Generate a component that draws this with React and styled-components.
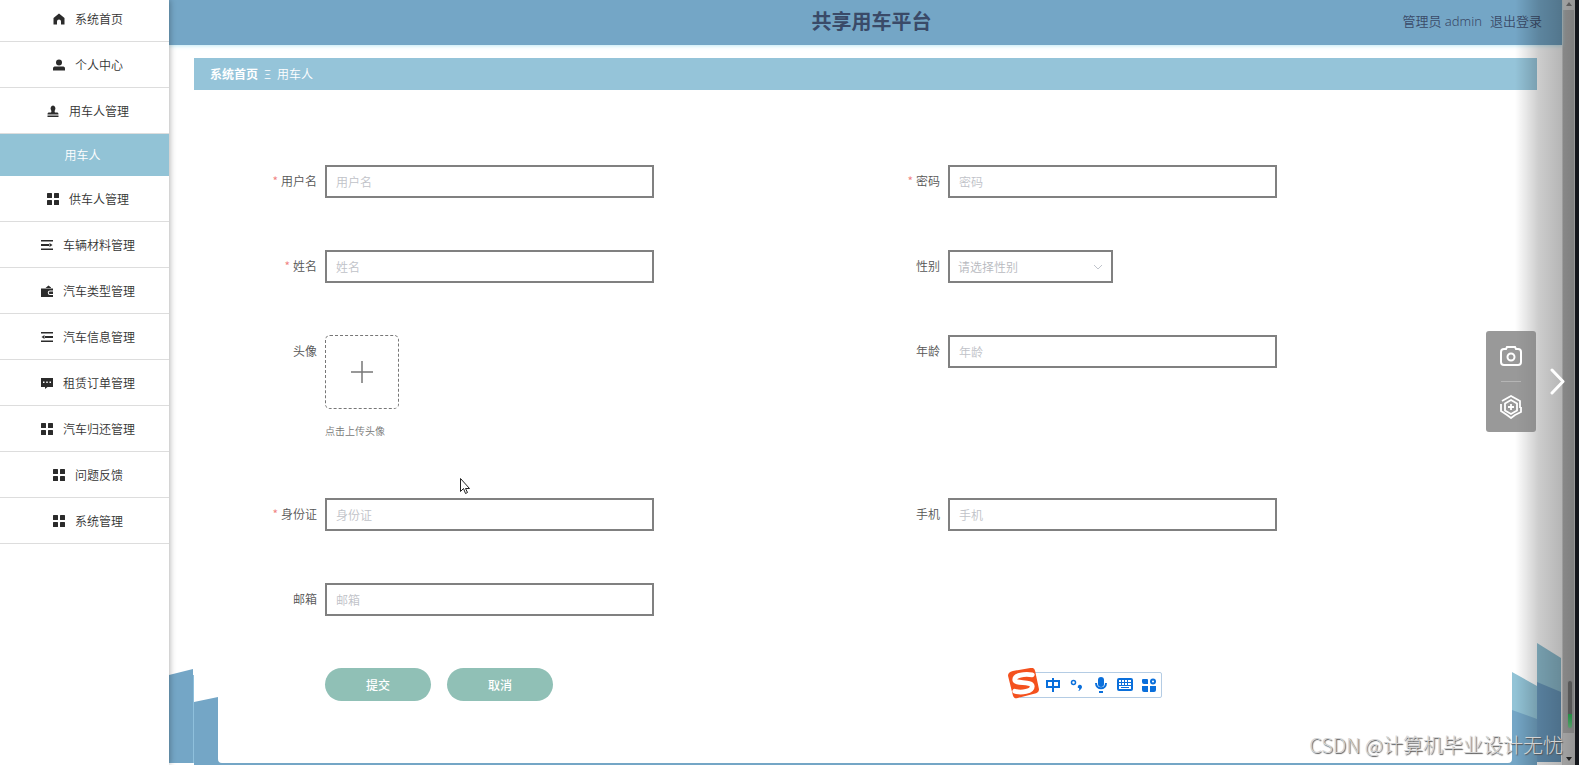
import React, { useState } from 'react';
import styled, { createGlobalStyle, css } from 'styled-components';

const GlobalStyle = createGlobalStyle`
    * {
        box-sizing: border-box;
    }

    body {
        margin: 0;
        background: #fff;
        color: #333;
        font-family: "Noto Sans CJK SC", "Noto Sans", sans-serif;
        font-size: 12px;
        font-weight: 350;
        overflow: hidden;
    }

    button, input, select {
        font-family: inherit;
        font-size: 12px;
        font-weight: inherit;
    }
`;

const icons = {
    home: <path d="M12 1 1 10v13h7v-6a4 4 0 0 1 8 0v6h7V10z" />,
    user: (
        <>
            <circle cx="12" cy="7" r="6" />
            <path d="M0 23v-4c0-3 2-4 5-4h14c3 0 5 1 5 4v4z" />
        </>
    ),
    stamp: (
        <>
            <path d="M12 1a6 6 0 0 0-4 9c1 2 1 4 0 5H5c-3 0-4 1-4 4h22c0-3-1-4-4-4h-3c-1-1-1-3 0-5a6 6 0 0 0-4-9z" />
            <path d="M1 21h22v3H1z" />
        </>
    ),
    grid: (
        <>
            <rect x="0" y="0" width="10" height="10" rx="1" />
            <rect x="14" y="0" width="10" height="10" rx="1" />
            <rect x="0" y="14" width="10" height="10" rx="1" />
            <rect x="14" y="14" width="10" height="10" rx="1" />
        </>
    ),
    unfold: <path d="M0 2h24v3H0zM0 10h16v4H0zM0 19h24v3H0zM17 8l6 4-6 4z" />,
    fold: <path d="M0 2h24v3H0zM8 10h16v4H8zM0 19h24v3H0zM7 8l-6 4 6 4z" />,
    wallet: (
        <>
            <path d="M0 7h24v4h-6a4.500 4.500 0 0 0 0 9h6v4H0z" />
            <path d="M9 6l6-5 5 4v1zM18 13h6v5h-6a2.500 2.500 0 0 1 0-5z" />
        </>
    ),
    comment: (
        <path
            fillRule="evenodd"
            d="M0 2h24v18H13l-5 4v-4H0zM4 9v3h3V9zm6.500 0v3h3V9zM17 9v3h3V9z"
        />
    ),
};

const menu = [
    { label: '系统首页', icon: 'home' },
    { label: '个人中心', icon: 'user' },
    { label: '用车人管理', icon: 'stamp', children: ['用车人'] },
    { label: '供车人管理', icon: 'grid' },
    { label: '车辆材料管理', icon: 'unfold' },
    { label: '汽车类型管理', icon: 'wallet' },
    { label: '汽车信息管理', icon: 'fold' },
    { label: '租赁订单管理', icon: 'comment' },
    { label: '汽车归还管理', icon: 'grid' },
    { label: '问题反馈', icon: 'grid' },
    { label: '系统管理', icon: 'grid' },
];

const TextField = ({ name, label, required, type = 'text', value, onChange }) => (
    <FormItem>
        <Label htmlFor={name} $required={required}>{label}</Label>
        <Input id={name} name={name} type={type} placeholder={label} value={value} onChange={onChange} />
    </FormItem>
);

export default function App() {
    const [form, setForm] = useState({
        username: '',
        password: '',
        realname: '',
        gender: '',
        age: '',
        idcard: '',
        phone: '',
        email: '',
    });

    const handleChange = (e) => {
        const { name, value } = e.target;
        setForm((prev) => ({ ...prev, [name]: value }));
    };

    const field = (name) => ({ name, value: form[name], onChange: handleChange });

    return (
        <Page>
            <GlobalStyle />
            <Sidebar>
                <Menu>
                    {menu.map((item) => (
                        <li key={item.label}>
                            <MenuLink href="#">
                                <MenuIcon viewBox="0 0 24 24">{icons[item.icon]}</MenuIcon>
                                {item.label}
                            </MenuLink>
                            {item.children?.map((child) => (
                                <SubLink key={child} href="#">{child}</SubLink>
                            ))}
                        </li>
                    ))}
                </Menu>
            </Sidebar>

            <Main>
                <Header>
                    <Title>共享用车平台</Title>
                    <UserArea>
                        <span>管理员 admin</span>
                        <Logout href="#">退出登录</Logout>
                    </UserArea>
                </Header>
                <Breadcrumb>
                    <b>系统首页</b>
                    <span>Ξ</span>
                    <span>用车人</span>
                </Breadcrumb>

                <Form onSubmit={(e) => e.preventDefault()}>
                    <TextField label="用户名" required {...field('username')} />
                    <TextField label="密码" type="password" required {...field('password')} />
                    <TextField label="姓名" required {...field('realname')} />
                    <FormItem>
                        <Label htmlFor="gender">性别</Label>
                        <SelectWrap>
                            <Select id="gender" {...field('gender')}>
                                <option value="">请选择性别</option>
                                <option value="男">男</option>
                                <option value="女">女</option>
                            </Select>
                            <Chevron viewBox="0 0 10 6"><path d="M1 1l4 4 4-4" /></Chevron>
                        </SelectWrap>
                    </FormItem>
                    <FormItem $tall>
                        <Label htmlFor="avatar">头像</Label>
                        <div>
                            <Upload id="avatar" type="button">
                                <svg width="22" height="22" viewBox="0 0 22 22" stroke="#777" strokeWidth="1.500">
                                    <path d="M11 0v22M0 11h22" />
                                </svg>
                            </Upload>
                            <Hint>点击上传头像</Hint>
                        </div>
                    </FormItem>
                    <TextField label="年龄" {...field('age')} />
                    <TextField label="身份证" required {...field('idcard')} />
                    <TextField label="手机" {...field('phone')} />
                    <TextField label="邮箱" {...field('email')} />
                    <Actions>
                        <Button type="submit">提交</Button>
                        <Button type="button">取消</Button>
                    </Actions>
                </Form>

                <BottomBar />
                <Decor $side="left" width="55" height="96" viewBox="0 0 55 96">
                    <path fill="#74a6c6" d="M0 6 24 0v94H0z" />
                    <path fill="#74a6c6" d="M25 33 49 28v62q0 4 4 4h2v2H25z" />
                    <path stroke="#8fc0dc" d="M24.500 6v88" />
                </Decor>
                <Decor $side="right" width="55" height="122" viewBox="0 0 55 122">
                    <path fill="#92c3d6" d="M5 29 30 43v79H5z" />
                    <path fill="#92c3d6" d="M30 0 54 15v104H30z" />
                    <path fill="#74a6c6" d="M5 67 30 76v46H0v-2h1q4 0 4-4z" />
                    <path fill="#6c9dc2" d="M30 39 54 49v70H30z" />
                </Decor>
            </Main>

            <ScrollTrack>
                <Arrow viewBox="0 0 6 4"><path d="M0 4 3 0l3 4z" /></Arrow>
                <Thumb><Level /></Thumb>
                <Arrow viewBox="0 0 6 4" $down><path d="M0 0h6L3 4z" /></Arrow>
            </ScrollTrack>
            <ScreenEdge />
            <Shade />

            <SideTools>
                <ToolButton type="button" aria-label="截图">
                    <svg width="22" height="22" viewBox="0 0 22 22" fill="none" stroke="#fff" strokeWidth="2">
                        <path d="M7 2h8l1 2h2q3 0 3 3v10q0 3-3 3H4q-3 0-3-3V7q0-3 3-3h2z" />
                        <circle cx="11" cy="12" r="3.500" />
                    </svg>
                </ToolButton>
                <Divider />
                <ToolButton type="button" aria-label="防护">
                    <svg width="22" height="24" viewBox="0 0 22 24" fill="none" stroke="#fff" strokeWidth="1.800">
                        <path d="M1 9v7l6 4M2 6l9-5 9 5v7M21 12v5l-6 3-4 3-4-3" />
                        <path d="M11 5l6 3.500v7L11 19l-6-3.500v-7z" />
                        <path d="M11 9v6M8 12h6" />
                    </svg>
                </ToolButton>
            </SideTools>
            <NextButton type="button" aria-label="下一个">
                <svg width="15" height="27" viewBox="0 0 15 27" fill="none" stroke="#fff" strokeWidth="3" strokeLinecap="round" strokeLinejoin="round">
                    <path d="M2 2l11 11.500L2 25" />
                </svg>
            </NextButton>

            <ImeBar>
                <ImeLogo viewBox="0 0 32 32">
                    <path fill="#f4511e" d="M5 3 23 0q4-1 5 3l4 19q0 3-3 4L10 31q-4 1-5-3L0 8q0-4 5-5z" />
                    <path
                        fill="none"
                        stroke="#fff"
                        strokeWidth="5"
                        strokeLinecap="round"
                        d="M25 7C17 6 7 7 7 12c0 5 18 1 18 7 0 5-11 7-18 5"
                    />
                </ImeLogo>
                <ImeIcon viewBox="0 0 16 16">
                    <path fill="none" stroke="#0a6fdb" strokeWidth="2" d="M2 4h12v6H2zM8 1v14" />
                </ImeIcon>
                <ImeIcon viewBox="0 0 16 16">
                    <circle cx="4.500" cy="5.500" r="2" fill="none" stroke="#0a6fdb" strokeWidth="1.500" />
                    <path fill="#0a6fdb" d="M9 9q1-2 3-1 2 2 0 4-1 2-3 2 2-1 1-3-2 0-1-2z" />
                </ImeIcon>
                <ImeIcon viewBox="0 0 16 16">
                    <rect x="5" y="0" width="6" height="10" rx="3" fill="#0a6fdb" />
                    <path fill="none" stroke="#0a6fdb" strokeWidth="2" d="M3 6c0 7 10 7 10 0M6 15h4" />
                </ImeIcon>
                <ImeIcon viewBox="0 0 16 16">
                    <rect x="1" y="2" width="14" height="11" rx="1" fill="none" stroke="#0a6fdb" strokeWidth="2" />
                    <path fill="none" stroke="#0a6fdb" strokeWidth="1" d="M2 5.500h12M2 8.500h12M4.500 3v6M7.500 3v6M10.500 3v6" />
                    <path stroke="#0a6fdb" strokeWidth="1" d="M4 10.500h8" />
                </ImeIcon>
                <ImeIcon viewBox="0 0 16 16">
                    <path fill="#0a6fdb" d="M2 2h4q1 0 1 1v4H3Q1 7 1 5V3q0-1 1-1zM1 9h6v6H3q-2 0-2-2zM9 9h6v4q0 2-2 2H9z" />
                    <circle cx="12" cy="4.500" r="2" fill="none" stroke="#0a6fdb" strokeWidth="2" />
                </ImeIcon>
            </ImeBar>

            <Watermark>CSDN @计算机毕业设计无忧</Watermark>
            <Pointer viewBox="0 0 11 17">
                <path d="M.5.5v13l3-3 2 5 2-1-2-4h4z" />
            </Pointer>
        </Page>
    );
}

const Page = styled.div`
    position: relative;
    display: flex;
    height: 100vh;
    overflow: hidden;
`;

const Sidebar = styled.nav`
    position: relative;
    z-index: 1;
    flex: 0 0 169px;
    background: #fff;
    box-shadow: 1px 0 6px rgba(0, 0, 0, 0.3);
`;

// the menu is scrolled a little, so the first row is cut at the top
const Menu = styled.ul`
    list-style: none;
    margin: -4px 0 0;
    padding: 0;
`;

const MenuLink = styled.a`
    display: flex;
    align-items: center;
    justify-content: center;
    gap: 10px;
    height: 46px;
    padding-left: 7px;
    border-bottom: 1px solid #ddd;
    color: #333;
    text-decoration: none;
`;

const MenuIcon = styled.svg`
    width: 12px;
    height: 12px;
    fill: #2b2b2b;
`;

const SubLink = styled.a`
    display: flex;
    align-items: center;
    justify-content: center;
    height: 42px;
    padding: 0 4px 2px 0;
    background: #92c3d6;
    color: #fff;
    text-decoration: none;
`;

const Main = styled.main`
    position: relative;
    flex: 1;
    min-width: 0;
    background: #fff;
`;

const Header = styled.header`
    display: grid;
    grid-template-columns: 1fr auto 1fr;
    align-items: center;
    height: 45px;
    padding: 0 20px 4px 32px;
    background: #74a6c6;
    box-shadow: 0 1px 4px #bfeaf5;
    color: #3a4a68;
`;

const Title = styled.h1`
    grid-column: 2;
    margin: 0;
    font-size: 20px;
    line-height: 30px;
    font-weight: 700;
`;

const UserArea = styled.div`
    display: flex;
    justify-content: flex-end;
    gap: 8px;
    font-family: "Noto Sans", "Noto Sans CJK SC", sans-serif;
    font-size: 13px;
    line-height: 20px;
`;

const Logout = styled.a`
    color: inherit;
    text-decoration: none;
`;

const Breadcrumb = styled.div`
    display: flex;
    align-items: center;
    gap: 6px;
    height: 32px;
    margin: 13px 25px 0;
    padding: 0 16px 2px;
    background: #95c4d9;
    color: #fff;
`;

const Form = styled.form`
    display: grid;
    grid-template-columns: 1fr 1fr;
    row-gap: 52px;
    margin: 75px 74px 0 73px;
`;

const FormItem = styled.div`
    display: flex;
    align-items: flex-start;
    height: ${(props) => (props.$tall ? '111px' : '33px')};
`;

const Label = styled.label`
    flex: 0 0 83px;
    padding-right: 8px;
    color: #555;
    line-height: 32px;
    text-align: right;

    ${(props) => props.$required && css`
        &::before {
            content: '*';
            margin-right: 3px;
            color: #f08080;
        }
    `}
`;

const control = css`
    height: 33px;
    border: 2px solid #808080;
    border-radius: 0;
    background: #fff;
    outline: none;
`;

const Input = styled.input`
    ${control}
    width: 329px;
    padding: 0 9px 1px;
    color: #555;

    &::placeholder {
        color: #c0c2c8;
    }
`;

const SelectWrap = styled.div`
    position: relative;
`;

const Select = styled.select`
    ${control}
    appearance: none;
    width: 165px;
    padding: 0 8px;
    color: #b8bac0;
`;

const Chevron = styled.svg`
    position: absolute;
    top: 14px;
    right: 10px;
    width: 10px;
    height: 6px;
    fill: none;
    stroke: #c0c4cc;
    pointer-events: none;
`;

const Upload = styled.button`
    display: flex;
    align-items: center;
    justify-content: center;
    width: 74px;
    height: 74px;
    padding: 0;
    border: 1px dashed #777;
    border-radius: 5px;
    background: #fff;
    cursor: pointer;
`;

const Hint = styled.div`
    margin-top: 14px;
    color: #777;
    font-size: 10px;
    line-height: 16px;
`;

const Actions = styled.div`
    grid-column: 1 / -1;
    display: flex;
    gap: 16px;
    padding-left: 83px;
`;

const Button = styled.button`
    width: 106px;
    height: 33px;
    border: none;
    border-radius: 17px;
    background: #90c0b6;
    color: #fff;
    font-weight: 500;
    cursor: pointer;

    &:hover {
        background: #7fb3a8;
    }
`;

const BottomBar = styled.div`
    position: absolute;
    left: 49px;
    right: 49px;
    bottom: 0;
    height: 2px;
    background: #74a6c6;
`;

const Decor = styled.svg`
    position: absolute;
    bottom: 0;
    ${(props) => props.$side}: 0;
`;

const ScrollTrack = styled.div`
    flex: 0 0 13px;
    display: flex;
    flex-direction: column;
    align-items: center;
    justify-content: space-between;
    border-left: 1px solid #ddd;
    background: #e4e4e4;
`;

const Arrow = styled.svg`
    width: 6px;
    height: 4px;
    margin: ${(props) => (props.$down ? '0 0 4px' : '2px 0 0')};
    fill: ${(props) => (props.$down ? '#333' : '#888')};
`;

const Thumb = styled.div`
    flex: 1;
    display: flex;
    align-items: flex-end;
    justify-content: flex-end;
    align-self: stretch;
    margin: 4px 1px 24px 0;
    padding: 0 1px 4px 0;
    background: #c0c0c0;
`;

const Level = styled.div`
    width: 6px;
    height: 49px;
    border: 1px solid #bbb;
    border-radius: 3px;
    background: linear-gradient(#808080 70%, #30d060 70%, #80e89c);
`;

const ScreenEdge = styled.div`
    flex: 0 0 4px;
    background: #14161c;
`;

const Shade = styled.div`
    position: absolute;
    top: 0;
    right: 4px;
    bottom: 0;
    width: 60px;
    background: linear-gradient(to right, rgba(0, 0, 0, 0), rgba(0, 0, 0, 0.2) 40%, rgba(0, 0, 0, 0.34));
    pointer-events: none;
`;

const SideTools = styled.div`
    position: absolute;
    top: calc(50% - 52px);
    right: 43px;
    display: flex;
    flex-direction: column;
    align-items: center;
    width: 50px;
    height: 101px;
    border-radius: 3px;
    background: rgba(128, 128, 128, 0.8);
`;

const ToolButton = styled.button`
    flex: 1;
    display: flex;
    align-items: center;
    padding: 0;
    border: none;
    background: none;
`;

const Divider = styled.div`
    width: 20px;
    height: 1px;
    background: #b5b5b5;
`;

const NextButton = styled.button`
    position: absolute;
    top: calc(50% - 15px);
    right: 14px;
    display: flex;
    padding: 0;
    border: none;
    background: none;
`;

const ImeBar = styled.div`
    position: absolute;
    right: 417px;
    bottom: 67px;
    display: flex;
    align-items: center;
    gap: 8px;
    height: 26px;
    padding: 0 4px 0 0;
    border: 1px solid #b4cce4;
    border-radius: 2px;
    background: #fff;
`;

const ImeLogo = styled.svg`
    width: 31px;
    height: 31px;
    margin: -4px -2px 0 -12px;
`;

const ImeIcon = styled.svg`
    width: 16px;
    height: 16px;
`;

const Watermark = styled.div`
    position: absolute;
    right: 16px;
    bottom: 5px;
    color: #d4d4d4;
    font-size: 20px;
    font-weight: 300;
    line-height: 30px;
    text-shadow: 1px 1px 1px #555;
    white-space: nowrap;
`;

const Pointer = styled.svg`
    position: absolute;
    top: 478px;
    left: 460px;
    width: 11px;
    height: 17px;
    fill: #fff;
    stroke: #222;
    pointer-events: none;
`;
